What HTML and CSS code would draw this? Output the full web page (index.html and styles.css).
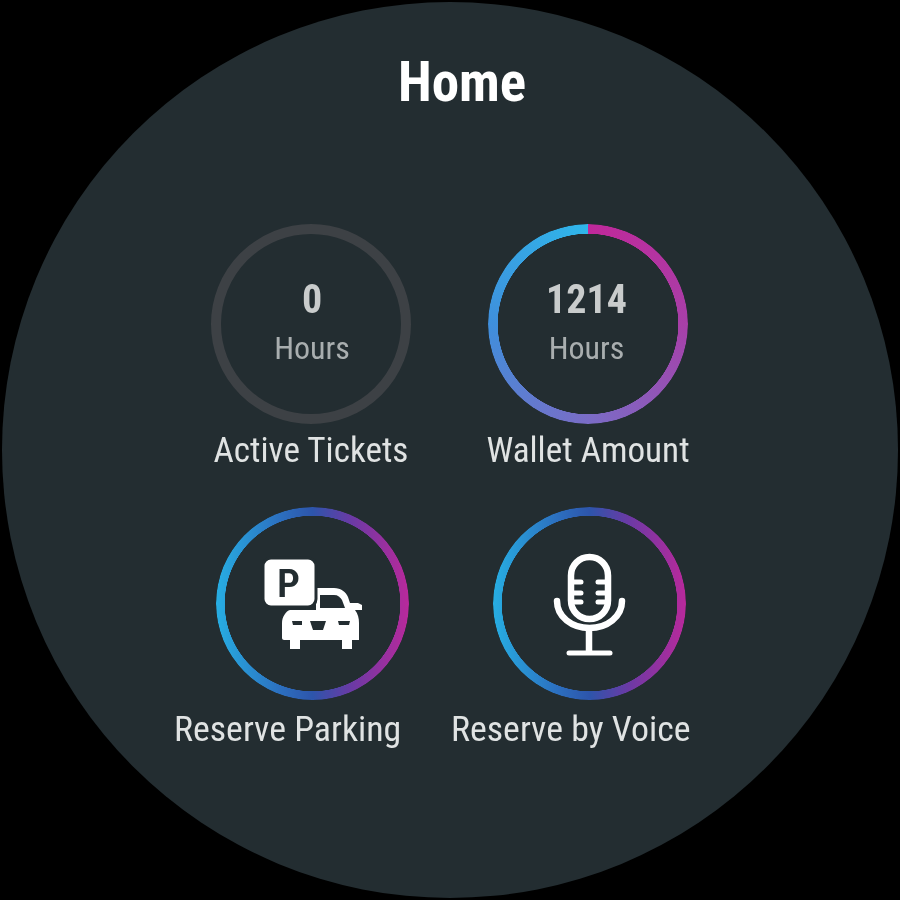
FILE: index.html
```html
<!DOCTYPE html>
<html lang="en">
<head>
    <meta charset="UTF-8">
    <title>Home</title>
    <link rel="stylesheet" href="styles.css">
</head>
<body>
    <div class="watch">
        <h1 class="title">Home</h1>

        <div class="row row-stats">
            <div class="stat">
                <div class="ring ring-empty">
                    <span class="num">0</span>
                    <span class="unit">Hours</span>
                </div>
                <div class="label">Active Tickets</div>
            </div>
            <div class="stat">
                <div class="ring ring-wallet">
                    <span class="num">1214</span>
                    <span class="unit">Hours</span>
                </div>
                <div class="label">Wallet Amount</div>
            </div>
        </div>

        <div class="row row-actions">
            <div class="action">
                <div class="circle">
                    <svg class="icon" width="105" height="97" viewBox="0 0 105 97">
                        <path fill="#fff" d="M56 33H74C81 33 86 37 88 42L90 48H98L102 50V55H95C98 59 99 63 99 68V85H92V94H82V85H40V94H30V85H24C23 85 22 84 22 83V68C22 62 26 56 30 55H56Z"/>
                        <path fill="#232d31" d="M60 40H74C78 40 80 42 82 45L85 53H60Z"/>
                        <path fill="#232d31" d="M32 66H42V70H33ZM78 66H90L89 70H79ZM50 66H66L63 75H53Z"/>
                        <rect x="3" y="3" width="53" height="49" rx="8" fill="#fff" stroke="#232d31" stroke-width="3"/>
                        <text class="p-sign" x="17" y="42" textLength="23" lengthAdjust="spacingAndGlyphs">P</text>
                    </svg>
                </div>
                <div class="label">Reserve Parking</div>
            </div>
            <div class="action">
                <div class="circle">
                    <svg class="icon" width="80" height="110" viewBox="0 0 80 110" fill="none" stroke="#fff" stroke-width="6.5" stroke-linecap="round">
                        <rect x="21" y="8" width="37" height="62" rx="18.5"/>
                        <path d="M21 33H31M48 33H58M21 44H31M48 44H58M21 53H31M48 53H58" stroke-width="5"/>
                        <path d="M7 52C7 68 22 79 39.500 79S72 68 72 52"/>
                        <path d="M39 80V104" stroke-linecap="butt"/>
                        <path d="M19 104H60" stroke-width="5"/>
                    </svg>
                </div>
                <div class="label">Reserve by Voice</div>
            </div>
        </div>
    </div>
</body>
</html>
```

FILE: styles.css
```css
body {
    margin: 0;
    background-color: #000;
    font-family: Roboto, "Liberation Sans", sans-serif;
    font-stretch: 75%;
}
.watch {
    width: 896px;
    height: 896px;
    margin: 2px;
    border-radius: 50%;
    background-color: #232d31;
    overflow: hidden;
    filter: blur(0.5px);
}
.title {
    margin: 50px 0 112px;
    padding-left: 24px;
    font-size: 55px;
    line-height: 60px;
    font-weight: 700;
    text-align: center;
    color: #fff;
}
.row {
    display: flex;
}
.row-stats {
    padding-left: 206px;
    gap: 71px;
}
.row-actions {
    margin-top: 37px;
    padding-left: 172px;
    gap: 37px;
}
.stat {
    width: 206px;
    display: flex;
    flex-direction: column;
    align-items: center;
}
.action {
    width: 240px;
}
.ring {
    width: 200px;
    height: 200px;
    box-sizing: border-box;
    border-radius: 50%;
    display: flex;
    flex-direction: column;
    align-items: center;
    justify-content: center;
    gap: 8px;
}
.ring-empty {
    border: 10px solid #3d4145;
    padding-left: 2px;
}
.ring-wallet {
    position: relative;
    padding-right: 3px;
}
.ring-wallet::before {
    content: "";
    position: absolute;
    inset: 0;
    border-radius: 50%;
    background: conic-gradient(#c0289a, #a83fa8 25%, #7a6cc6 50%, #3f8fdc 75%, #2fb6ea);
    -webkit-mask: radial-gradient(closest-side, transparent 90px, #000 90.5px);
    mask: radial-gradient(closest-side, transparent 90px, #000 90.5px);
}
.num {
    font-size: 40px;
    line-height: 40px;
    font-weight: 700;
    color: #c9cccc;
}
.unit {
    font-size: 32px;
    line-height: 40px;
    color: #a9aeaf;
}
.label {
    line-height: 40px;
    color: #e0e3e3;
    white-space: nowrap;
}
.stat .label {
    margin-top: 6px;
    font-size: 35.2px;
}
.action .label {
    margin-top: 9px;
    font-size: 35.8px;
}
.circle {
    position: relative;
    width: 193px;
    height: 193px;
    margin-left: 42px;
    display: flex;
    align-items: center;
    justify-content: center;
}
.circle::before {
    content: "";
    position: absolute;
    inset: 0;
    border-radius: 50%;
    background: linear-gradient(90deg, #27aee3, #2c70c0 33%, #2d55ab 50%, #6a3aa5 70%, #b9299b);
    -webkit-mask: radial-gradient(closest-side, transparent 87.5px, #000 88px);
    mask: radial-gradient(closest-side, transparent 87.5px, #000 88px);
}
.icon {
    display: block;
}
.p-sign {
    font-family: Roboto, sans-serif;
    font-size: 38px;
    font-weight: 600;
    fill: #232d31;
}
```
